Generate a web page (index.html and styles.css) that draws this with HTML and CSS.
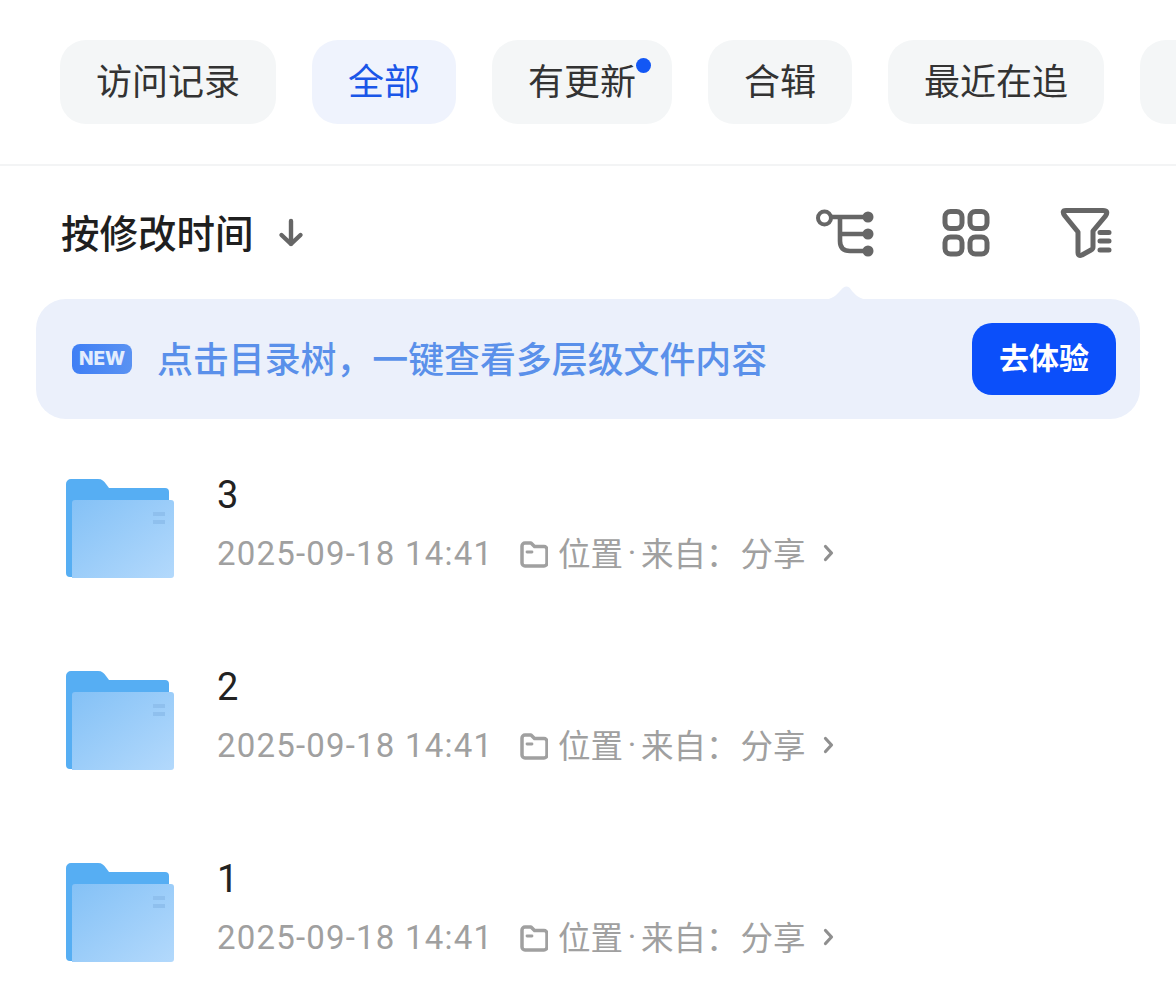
FILE: index.html
```html
<!DOCTYPE html>
<html lang="zh">
<head>
<meta charset="utf-8">
<title>文件</title>
<link rel="stylesheet" href="styles.css">
</head>
<body>
<svg class="defs" width="0" height="0" aria-hidden="true">
  <defs>
    <linearGradient id="front" x1="0" y1="0" x2="1" y2="1">
      <stop offset="0" stop-color="#84c1f6"/>
      <stop offset="1" stop-color="#b3d9fc"/>
    </linearGradient>
    <symbol id="folder" viewBox="0 0 108 99">
      <path d="M0 5a5 5 0 0 1 5-5h27c4 0 6 2 8 5l3 4h56a4 4 0 0 1 4 4v80a5 5 0 0 1-5 5H4a4 4 0 0 1-4-4z" fill="#56aef3"/>
      <path d="M6 24a3 3 0 0 1 3-3h96a3 3 0 0 1 3 3v72a3 3 0 0 1-3 3H6z" fill="url(#front)"/>
      <path d="M87 33h12v4H87zM87 41h12v4H87z" fill="#8fc0ee"/>
    </symbol>
    <symbol id="loc" viewBox="0 0 28 28">
      <path d="M2 6a3 3 0 0 1 3-3h6l3.500 3.500H24a3 3 0 0 1 3 3V23a3 3 0 0 1-3 3H5a3 3 0 0 1-3-3z" fill="none" stroke="#a0a0a0" stroke-width="3.500" stroke-linejoin="round"/>
      <path d="M7 12h5" stroke="#a0a0a0" stroke-width="2.800" stroke-linecap="round"/>
    </symbol>
    <symbol id="chev" viewBox="0 0 12 20">
      <path d="M2.500 3.500 8.500 10 2.500 16.500" fill="none" stroke="#8f8f8f" stroke-width="3.200" stroke-linecap="round" stroke-linejoin="round"/>
    </symbol>
  </defs>
</svg>

<nav class="tabs">
  <div class="tab">访问记录</div>
  <div class="tab tab-active">全部</div>
  <div class="tab tab-dot">有更新<span class="dot"></span></div>
  <div class="tab">合辑</div>
  <div class="tab">最近在追</div>
  <div class="tab tab-cut"></div>
</nav>

<section class="toolbar">
  <div class="sort">
    <span class="sort-label">按修改时间</span>
    <svg class="sort-arrow" width="26" height="30" viewBox="0 0 26 30"><path d="M13 3v23M3.500 17 13 26l9.500-9" fill="none" stroke="#666" stroke-width="4.400" stroke-linecap="round" stroke-linejoin="round"/></svg>
  </div>
  <div class="tools">
    <svg width="60" height="52" viewBox="815 205 60 52">
      <circle cx="824.500" cy="216" r="6.500" fill="none" stroke="#666" stroke-width="4"/>
      <path d="M831 215h37M840 215v24q0 10 10 10h18M840 232h28" fill="none" stroke="#666" stroke-width="4.600"/>
      <circle cx="868" cy="215" r="5.500" fill="#666"/>
      <circle cx="868" cy="232" r="5.500" fill="#666"/>
      <circle cx="868" cy="249" r="5.500" fill="#666"/>
    </svg>
    <svg width="52" height="52" viewBox="940 207 52 52" fill="none" stroke="#666" stroke-width="5">
      <rect x="945" y="211.500" width="17" height="17" rx="5.500"/>
      <rect x="970" y="211.500" width="17" height="17" rx="5.500"/>
      <rect x="945" y="237" width="17" height="17" rx="5.500"/>
      <rect x="970" y="237" width="17" height="17" rx="5.500"/>
    </svg>
    <svg width="57" height="52" viewBox="1057 207 57 52" fill="none" stroke="#666">
      <path d="M1066 210.500h37q6 0 2.500 5.500L1093 231v16q0 2-2 3l-9 5q-4 1.500-4-2.500V232l-13-16q-4-5.500 1-5.500z" stroke-width="5" stroke-linejoin="round"/>
      <path d="M1100 232.500h9M1100 241h9M1100 250h9" stroke-width="5" stroke-linecap="round"/>
    </svg>
  </div>
</section>

<aside class="banner">
  <svg class="notch" width="52" height="16" viewBox="0 0 52 16"><path d="M0 16c10 0 15-3 20-9 4-5 8-7 12 0 5 6 10 9 20 9z" fill="#ebf0fb"/></svg>
  <div class="banner-main">
    <span class="new">NEW</span>
    <span class="banner-text">点击目录树，一键查看多层级文件内容</span>
  </div>
  <button class="try">去体验</button>
</aside>

<main class="list">
  <article class="row">
    <svg class="folder" width="108" height="99"><use href="#folder"/></svg>
    <div class="info">
      <div class="name">3</div>
      <div class="meta"><span class="date">2025-09-18 14:41</span><svg class="loc" width="28" height="28"><use href="#loc"/></svg><span class="cjk where">位置</span><span class="sep">·</span><span class="cjk">来自：</span><span class="cjk share">分享</span><svg class="chev" width="12" height="20"><use href="#chev"/></svg></div>
    </div>
  </article>
  <article class="row">
    <svg class="folder" width="108" height="99"><use href="#folder"/></svg>
    <div class="info">
      <div class="name">2</div>
      <div class="meta"><span class="date">2025-09-18 14:41</span><svg class="loc" width="28" height="28"><use href="#loc"/></svg><span class="cjk where">位置</span><span class="sep">·</span><span class="cjk">来自：</span><span class="cjk share">分享</span><svg class="chev" width="12" height="20"><use href="#chev"/></svg></div>
    </div>
  </article>
  <article class="row">
    <svg class="folder" width="108" height="99"><use href="#folder"/></svg>
    <div class="info">
      <div class="name">1</div>
      <div class="meta"><span class="date">2025-09-18 14:41</span><svg class="loc" width="28" height="28"><use href="#loc"/></svg><span class="cjk where">位置</span><span class="sep">·</span><span class="cjk">来自：</span><span class="cjk share">分享</span><svg class="chev" width="12" height="20"><use href="#chev"/></svg></div>
    </div>
  </article>
</main>
</body>
</html>
```
FILE: styles.css
```css
* { box-sizing: border-box; }
html, body { margin: 0; padding: 0; }
body {
  width: 1176px;
  height: 1004px;
  overflow: hidden;
  background: #fff;
  color: #222;
  font-family: "Noto Sans CJK SC", "Noto Sans", sans-serif;
}
.defs { display: block; height: 0; }

.tabs {
  display: flex;
  gap: 36px;
  height: 166px;
  padding: 40px 0 0 60px;
  overflow: hidden;
  border-bottom: 2px solid #f3f4f5;
}
.tab {
  position: relative;
  flex: none;
  height: 84px;
  padding: 0 36px;
  border-radius: 26px;
  background: #f4f6f7;
  color: #333;
  font-size: 36px;
  line-height: 79px;
  white-space: nowrap;
}
.tab-active { background: #eff3fd; color: #1a56e8; }
.tab-cut { width: 100px; }
.dot {
  position: absolute;
  top: 18px;
  left: 144px;
  width: 15px;
  height: 15px;
  border-radius: 50%;
  background: #1257f5;
}

.toolbar {
  display: flex;
  justify-content: space-between;
  align-items: center;
  height: 133px;
  padding: 0 62px 0 61px;
}
.sort {
  display: flex;
  align-items: center;
  gap: 24px;
  color: #1f1f1f;
  font-size: 38.500px;
  font-weight: 500;
  line-height: 46px;
}
.sort-label { margin-bottom: 4px; }
.sort-arrow { margin-top: 0; }
.tools { display: flex; gap: 65px; }

.banner {
  position: relative;
  display: flex;
  justify-content: space-between;
  align-items: center;
  height: 120px;
  margin: 0 36px;
  padding: 0 24px 0 36px;
  border-radius: 30px;
  background: #ebf0fb;
}
.notch { position: absolute; top: -15px; left: 784px; }
.banner-main { display: flex; align-items: center; gap: 25px; }
.new {
  width: 60px;
  height: 30px;
  border-radius: 8px;
  background: linear-gradient(90deg, #3f7ff5, #5a92f2);
  color: #e3edfd;
  font-family: "Inter", sans-serif;
  font-size: 19px;
  font-weight: 800;
  line-height: 30px;
  text-align: center;
}
.banner-text {
  padding-bottom: 4px;
  color: #5a90ea;
  font-size: 35.900px;
  font-weight: 500;
  line-height: 44px;
}
.try {
  width: 144px;
  height: 72px;
  padding: 0 0 6px;
  border: 0;
  border-radius: 20px;
  background: #0b4ffa;
  color: #fff;
  font-family: inherit;
  font-size: 30px;
  font-weight: 700;
}

.list {
  display: flex;
  flex-direction: column;
  gap: 93px;
  margin-top: 60px;
  padding-left: 66px;
}
.row { display: flex; gap: 43px; height: 99px; }
.folder { flex: none; }
.name { color: #222; font-family: "Roboto", sans-serif; font-size: 38px; line-height: 32px; }
.meta {
  display: flex;
  align-items: center;
  height: 44px;
  margin-top: 20px;
  color: #a0a0a0;
  font-size: 32.500px;
  white-space: nowrap;
}
.date {
  width: 303px;
  font-family: "Roboto", sans-serif;
  font-size: 33px;
  letter-spacing: 1.200px;
}
.cjk { margin-bottom: 4px; }
.where { margin-left: 10px; }
.sep { width: 18px; font-family: "Roboto", sans-serif; text-align: center; }
.share { margin-left: 2px; }
.chev { margin-left: 17px; }
.loc { flex: none; margin-top: 2px; }
```
